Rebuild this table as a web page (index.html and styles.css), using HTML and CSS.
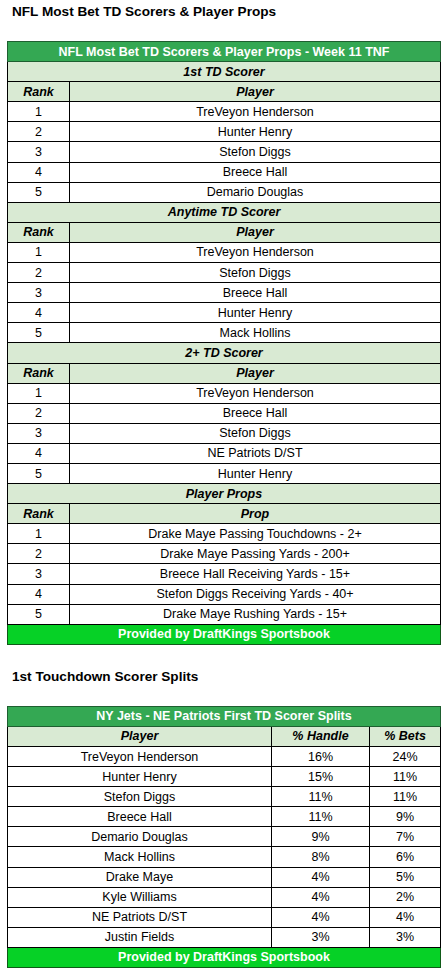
FILE: index.html
```html
<!DOCTYPE html>
<html>
<head>
<meta charset="utf-8">
<link rel="stylesheet" href="styles.css">
</head>
<body>
<div class="page">
  <h2 class="heading first">NFL Most Bet TD Scorers &amp; Player Props</h2>
  <table class="sheet t1">
    <colgroup><col class="c-rank"><col></colgroup>
    <tr class="title"><td colspan="2">NFL Most Bet TD Scorers &amp; Player Props - Week 11 TNF</td></tr>
    <tr class="section"><td colspan="2">1st TD Scorer</td></tr>
    <tr class="colhead"><td>Rank</td><td>Player</td></tr>
    <tr><td>1</td><td>TreVeyon Henderson</td></tr>
    <tr><td>2</td><td>Hunter Henry</td></tr>
    <tr><td>3</td><td>Stefon Diggs</td></tr>
    <tr><td>4</td><td>Breece Hall</td></tr>
    <tr><td>5</td><td>Demario Douglas</td></tr>
    <tr class="section"><td colspan="2">Anytime TD Scorer</td></tr>
    <tr class="colhead"><td>Rank</td><td>Player</td></tr>
    <tr><td>1</td><td>TreVeyon Henderson</td></tr>
    <tr><td>2</td><td>Stefon Diggs</td></tr>
    <tr><td>3</td><td>Breece Hall</td></tr>
    <tr><td>4</td><td>Hunter Henry</td></tr>
    <tr><td>5</td><td>Mack Hollins</td></tr>
    <tr class="section"><td colspan="2">2+ TD Scorer</td></tr>
    <tr class="colhead"><td>Rank</td><td>Player</td></tr>
    <tr><td>1</td><td>TreVeyon Henderson</td></tr>
    <tr><td>2</td><td>Breece Hall</td></tr>
    <tr><td>3</td><td>Stefon Diggs</td></tr>
    <tr><td>4</td><td>NE Patriots D/ST</td></tr>
    <tr><td>5</td><td>Hunter Henry</td></tr>
    <tr class="section"><td colspan="2">Player Props</td></tr>
    <tr class="colhead"><td>Rank</td><td>Prop</td></tr>
    <tr><td>1</td><td>Drake Maye Passing Touchdowns - 2+</td></tr>
    <tr><td>2</td><td>Drake Maye Passing Yards - 200+</td></tr>
    <tr><td>3</td><td>Breece Hall Receiving Yards - 15+</td></tr>
    <tr><td>4</td><td>Stefon Diggs Receiving Yards - 40+</td></tr>
    <tr><td>5</td><td>Drake Maye Rushing Yards - 15+</td></tr>
    <tr class="footer"><td colspan="2">Provided by DraftKings Sportsbook</td></tr>
  </table>

  <h2 class="heading second">1st Touchdown Scorer Splits</h2>
  <table class="sheet t2">
    <colgroup><col class="c-player"><col class="c-handle"><col></colgroup>
    <tr class="title"><td colspan="3">NY Jets - NE Patriots First TD Scorer Splits</td></tr>
    <tr class="colhead"><td>Player</td><td>% Handle</td><td>% Bets</td></tr>
    <tr><td>TreVeyon Henderson</td><td>16%</td><td>24%</td></tr>
    <tr><td>Hunter Henry</td><td>15%</td><td>11%</td></tr>
    <tr><td>Stefon Diggs</td><td>11%</td><td>11%</td></tr>
    <tr><td>Breece Hall</td><td>11%</td><td>9%</td></tr>
    <tr><td>Demario Douglas</td><td>9%</td><td>7%</td></tr>
    <tr><td>Mack Hollins</td><td>8%</td><td>6%</td></tr>
    <tr><td>Drake Maye</td><td>4%</td><td>5%</td></tr>
    <tr><td>Kyle Williams</td><td>4%</td><td>2%</td></tr>
    <tr><td>NE Patriots D/ST</td><td>4%</td><td>4%</td></tr>
    <tr><td>Justin Fields</td><td>3%</td><td>3%</td></tr>
    <tr class="footer"><td colspan="3">Provided by DraftKings Sportsbook</td></tr>
  </table>
</div>
</body>
</html>
```

FILE: styles.css
```css
html, body {
  margin: 0;
  padding: 0;
  background: #ffffff;
}

body {
  font-family: "Liberation Sans", Arial, sans-serif;
  color: #000000;
}

.page {
  padding: 0 4px 0 7px;
}

.heading {
  margin: 0;
  padding-left: 5px;
  font-size: 13.6px;
  font-weight: bold;
  line-height: 16px;
}

.heading.first {
  padding-top: 4px;
  margin-bottom: 21px;
}

.heading.second {
  margin-top: 24px;
  margin-bottom: 21px;
}

.sheet {
  width: 434px;
  border-collapse: collapse;
  table-layout: fixed;
  font-size: 12.5px;
}

.sheet td {
  height: 19.1px;
  padding: 0 3px;
  border: 1px solid #000000;
  text-align: center;
  vertical-align: middle;
  white-space: nowrap;
  overflow: hidden;
  line-height: 14px;
}

.t1 .c-rank {
  width: 62px;
}

.t2 .c-player {
  width: 264px;
}

.t2 .c-handle {
  width: 98px;
}

.sheet .title td {
  background: #34a853;
  color: #ffffff;
  font-weight: bold;
  border-color: #1e5f30;
}

.sheet .section td {
  background: #d9ead3;
  font-weight: bold;
  font-style: italic;
}

.sheet .colhead td {
  background: #d9ead3;
  font-weight: bold;
  font-style: italic;
}

.sheet .footer td {
  background: #06d126;
  color: #ffffff;
  font-weight: bold;
  border-color: #0f5a18;
}
```
